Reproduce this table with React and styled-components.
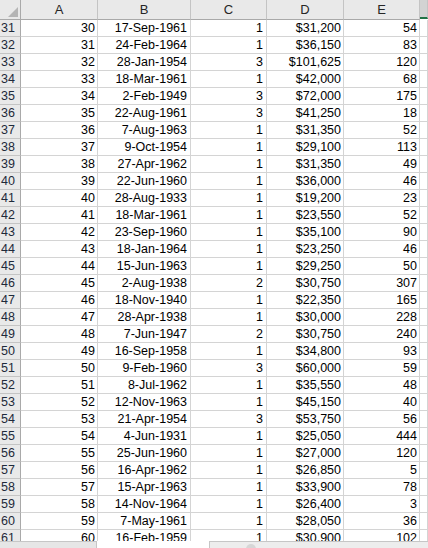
import React from 'react';
import styled, { createGlobalStyle } from 'styled-components';

const GlobalStyle = createGlobalStyle`
  html, body {
    margin: 0;
    padding: 0;
    background: #ffffff;
  }
  body {
    font-family: "Liberation Sans", Arial, sans-serif;
  }
`;

const rows = [
  [31, 30, '17-Sep-1961', 1, '$31,200', 54],
  [32, 31, '24-Feb-1964', 1, '$36,150', 83],
  [33, 32, '28-Jan-1954', 3, '$101,625', 120],
  [34, 33, '18-Mar-1961', 1, '$42,000', 68],
  [35, 34, '2-Feb-1949', 3, '$72,000', 175],
  [36, 35, '22-Aug-1961', 3, '$41,250', 18],
  [37, 36, '7-Aug-1963', 1, '$31,350', 52],
  [38, 37, '9-Oct-1954', 1, '$29,100', 113],
  [39, 38, '27-Apr-1962', 1, '$31,350', 49],
  [40, 39, '22-Jun-1960', 1, '$36,000', 46],
  [41, 40, '28-Aug-1933', 1, '$19,200', 23],
  [42, 41, '18-Mar-1961', 1, '$23,550', 52],
  [43, 42, '23-Sep-1960', 1, '$35,100', 90],
  [44, 43, '18-Jan-1964', 1, '$23,250', 46],
  [45, 44, '15-Jun-1963', 1, '$29,250', 50],
  [46, 45, '2-Aug-1938', 2, '$30,750', 307],
  [47, 46, '18-Nov-1940', 1, '$22,350', 165],
  [48, 47, '28-Apr-1938', 1, '$30,000', 228],
  [49, 48, '7-Jun-1947', 2, '$30,750', 240],
  [50, 49, '16-Sep-1958', 1, '$34,800', 93],
  [51, 50, '9-Feb-1960', 3, '$60,000', 59],
  [52, 51, '8-Jul-1962', 1, '$35,550', 48],
  [53, 52, '12-Nov-1963', 1, '$45,150', 40],
  [54, 53, '21-Apr-1954', 3, '$53,750', 56],
  [55, 54, '4-Jun-1931', 1, '$25,050', 444],
  [56, 55, '25-Jun-1960', 1, '$27,000', 120],
  [57, 56, '16-Apr-1962', 1, '$26,850', 5],
  [58, 57, '15-Apr-1963', 1, '$33,900', 78],
  [59, 58, '14-Nov-1964', 1, '$26,400', 3],
  [60, 59, '7-May-1961', 1, '$28,050', 36],
  [61, 60, '16-Feb-1959', 1, '$30,900', 102],
];

const Window = styled.div`
  width: 428px;
  height: 548px;
  display: flex;
  flex-direction: column;
  overflow: hidden;
  background: #fff;
`;

const Sheet = styled.div`
  flex: 1;
  min-height: 0;
  overflow: hidden;
  display: grid;
  grid-template-columns: 21px 77px 93px 76px 77px 76px 1fr;
  grid-template-rows: 20px;
  grid-auto-rows: 17px;
  font-size: 12.5px;
  color: #000;
`;

const Corner = styled.div`
  box-sizing: border-box;
  background: #e9e9e9;
  border-right: 1px solid #a9a9a9;
  border-bottom: 1px solid #a9a9a9;
  display: flex;
  justify-content: flex-end;
  align-items: flex-end;
  padding: 0 2px 2px 0;
`;

const Triangle = styled.div`
  width: 10px;
  height: 10px;
  background: #b5b5b5;
  clip-path: polygon(100% 0, 100% 100%, 0 100%);
`;

const ColHead = styled.div`
  box-sizing: border-box;
  background: ${(p) => (p.$selected ? '#d3d3d3' : '#e9e9e9')};
  border-right: 1px solid #c4c4c4;
  border-bottom: ${(p) => (p.$selected ? '2px solid #217346' : '1px solid #a9a9a9')};
  margin-bottom: ${(p) => (p.$selected ? '1px' : '0')};
  display: flex;
  justify-content: center;
  align-items: flex-end;
  padding-bottom: 2px;
  font-size: 13px;
  line-height: 14px;
  color: #262626;
`;

const RowHead = styled.div`
  box-sizing: border-box;
  background: #e9e9e9;
  border-right: 1px solid #a9a9a9;
  border-bottom: 1px solid #c4c4c4;
  padding-left: 1px;
  line-height: 16px;
  font-size: 12.5px;
  color: #1e2a3a;
  white-space: nowrap;
  overflow: hidden;
`;

const Cell = styled.div`
  box-sizing: border-box;
  border-right: 1px solid #d4d4d4;
  border-bottom: 1px solid #d4d4d4;
  text-align: right;
  padding-right: ${(p) => p.$pad || 2}px;
  line-height: 16px;
  white-space: nowrap;
  overflow: hidden;
`;

const BottomBar = styled.div`
  height: 7px;
  flex-shrink: 0;
  display: flex;
`;

const Tabs = styled.div`
  box-sizing: border-box;
  width: 97px;
  background: #e6e6e6;
  border-top: 1px solid #c6c6c6;
  border-right: 1px solid #c6c6c6;
`;

const Gap = styled.div`
  width: 112px;
  background: #fff;
`;

const Scroll = styled.div`
  box-sizing: border-box;
  flex: 1;
  background: #ededed;
  border-top: 1px solid #c6c6c6;
  border-left: 1px solid #c6c6c6;
  padding: 2px 0 0 36px;
`;

const Knob = styled.div`
  width: 10px;
  height: 10px;
  border-radius: 50%;
  background: #d6d6d6;
`;

export default function App() {
  return (
    <>
      <GlobalStyle />
      <Window>
        <Sheet>
          <Corner>
            <Triangle />
          </Corner>
          <ColHead>A</ColHead>
          <ColHead>B</ColHead>
          <ColHead>C</ColHead>
          <ColHead>D</ColHead>
          <ColHead>E</ColHead>
          <ColHead $selected />
          {rows.map((r) => (
            <React.Fragment key={r[0]}>
              <RowHead>{r[0]}</RowHead>
              <Cell>{r[1]}</Cell>
              <Cell $pad={3}>{r[2]}</Cell>
              <Cell $pad={3}>{r[3]}</Cell>
              <Cell>{r[4]}</Cell>
              <Cell>{r[5]}</Cell>
              <Cell />
            </React.Fragment>
          ))}
        </Sheet>
        <BottomBar>
          <Tabs />
          <Gap />
          <Scroll>
            <Knob />
          </Scroll>
        </BottomBar>
      </Window>
    </>
  );
}
